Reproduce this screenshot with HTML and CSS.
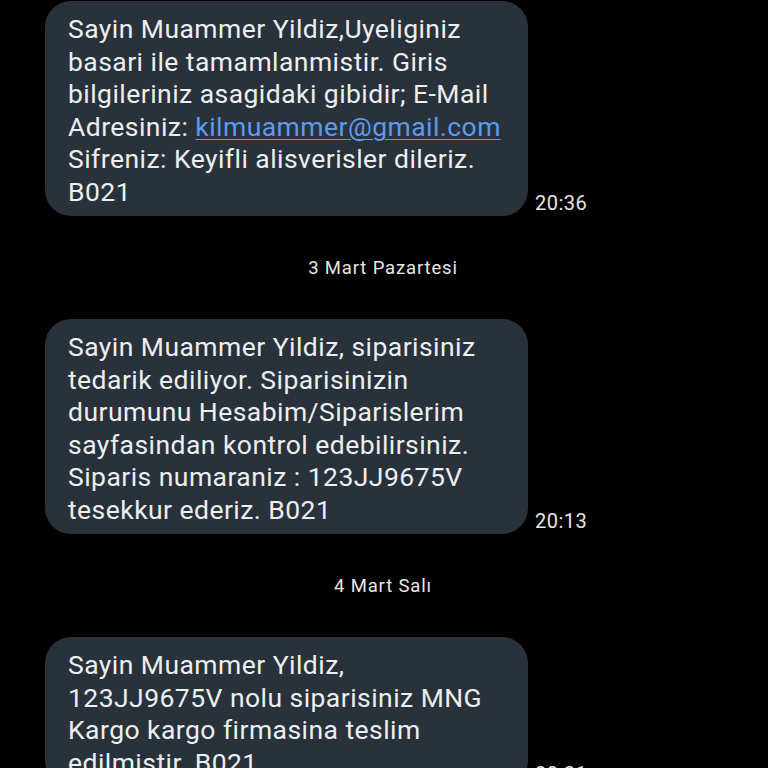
FILE: index.html
```html
<!DOCTYPE html>
<html>
<head>
<meta charset="utf-8">
<link rel="stylesheet" href="styles.css">
</head>
<body>
<div class="thread">
  <div class="row">
    <div class="bubble">Sayin Muammer Yildiz,Uyeliginiz<br>basari ile tamamlanmistir. Giris<br>bilgileriniz asagidaki gibidir; E-Mail<br>Adresiniz: <span class="link">kilmuammer@gmail.com</span><br>Sifreniz: Keyifli alisverisler dileriz.<br>B021</div>
    <div class="time">20:36</div>
  </div>
  <div class="date">3 Mart Pazartesi</div>
  <div class="row">
    <div class="bubble">Sayin Muammer Yildiz, siparisiniz<br>tedarik ediliyor. Siparisinizin<br>durumunu Hesabim/Siparislerim<br>sayfasindan kontrol edebilirsiniz.<br>Siparis numaraniz : 123JJ9675V<br>tesekkur ederiz. B021</div>
    <div class="time">20:13</div>
  </div>
  <div class="date">4 Mart Salı</div>
  <div class="row">
    <div class="bubble">Sayin Muammer Yildiz,<br>123JJ9675V nolu siparisiniz MNG<br>Kargo kargo firmasina teslim<br>edilmistir. B021</div>
    <div class="time">20:21</div>
  </div>
</div>
</body>
</html>
```
FILE: styles.css
```css
html, body {
  margin: 0;
  padding: 0;
  background: #000;
  width: 768px;
  height: 768px;
  overflow: hidden;
}
.thread {
  padding-top: 1px;
  font-family: Roboto, "Noto Sans", sans-serif;
}
.row {
  display: flex;
  align-items: flex-end;
  padding-left: 45px;
}
.bubble {
  width: 483px;
  flex: none;
  box-sizing: border-box;
  background: #29323b;
  border-radius: 26px;
  padding: 12px 0 8px 23px;
  color: #eceff1;
  font-size: 26.5px;
  letter-spacing: 0.45px;
  line-height: 32.5px;
  white-space: nowrap;
}
.link {
  color: #5b9bf0;
  text-decoration: underline;
  text-underline-offset: 3px;
  text-decoration-thickness: 1px;
}
.time {
  color: #e6e6e6;
  font-size: 20px;
  letter-spacing: 0.5px;
  margin-left: 7px;
  margin-bottom: 1px;
}
.date {
  height: 103px;
  display: flex;
  align-items: center;
  justify-content: center;
  color: #e6e6e6;
  font-size: 18.5px;
  letter-spacing: 0.85px;
  padding-right: 2px;
}
```
